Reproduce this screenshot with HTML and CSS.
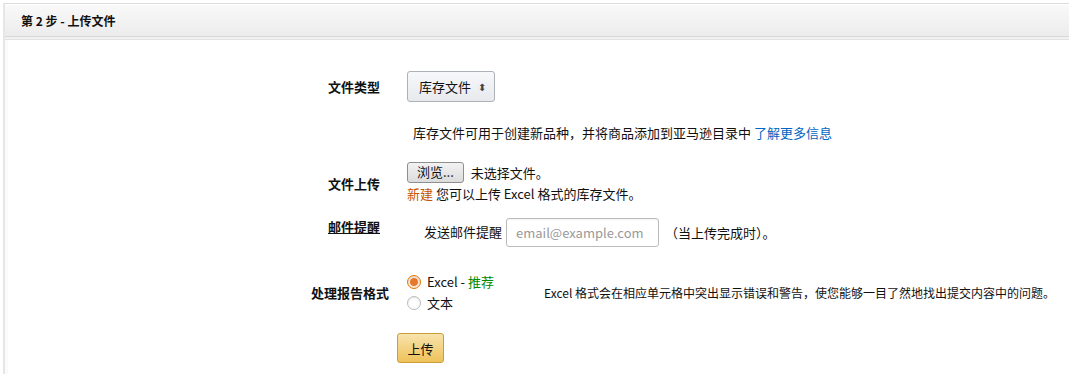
FILE: index.html
```html
<!DOCTYPE html>
<html lang="zh">
<head>
<meta charset="utf-8">
<title>上传文件</title>
<link rel="stylesheet" href="styles.css">
</head>
<body>
<div class="panel">
  <div class="panel-head">第 2 步 - 上传文件</div>
  <div class="panel-body">
    <div class="form">
      <div class="label">文件类型</div>
      <div class="field">
        <span class="select">库存文件<span class="arrows">⬍</span></span>
      </div>

      <div class="label gap-desc"></div>
      <div class="field desc gap-desc">库存文件可用于创建新品种，并将商品添加到亚马逊目录中 <a class="link" href="#">了解更多信息</a></div>

      <div class="label gap-upload">文件上传</div>
      <div class="field upload gap-upload">
        <div class="file-line"><span class="browse">浏览...</span><span class="nofile">未选择文件。</span></div>
        <div class="hint"><span class="new">新建</span> 您可以上传 Excel 格式的库存文件。</div>
      </div>

      <div class="label gap-email label-top"><span class="underline">邮件提醒</span></div>
      <div class="field email gap-email">
        <span>发送邮件提醒</span>
        <span class="input">email@example.com</span>
        <span class="when">（当上传完成时）。</span>
      </div>

      <div class="label wide gap-report">处理报告格式</div>
      <div class="field report gap-report">
        <div class="radios">
          <div class="radio-row"><span class="radio checked"></span><span>Excel - <span class="rec">推荐</span></span></div>
          <div class="radio-row"><span class="radio"></span><span>文本</span></div>
        </div>
        <div class="report-desc">Excel 格式会在相应单元格中突出显示错误和警告，使您能够一目了然地找出提交内容中的问题。</div>
      </div>

      <div class="label gap-submit"></div>
      <div class="field submit gap-submit"><span class="btn-upload">上传</span></div>
    </div>
  </div>
</div>
</body>
</html>
```

FILE: styles.css
```css
html, body {
  margin: 0;
  padding: 0;
  background: #fff;
}
body {
  font-family: "Noto Sans CJK SC", "Liberation Sans", sans-serif;
  font-size: 13px;
  color: #111;
  overflow: hidden;
}
.panel {
  margin: 3px -20px 0 3px;
  border: 1px solid #dcdcdc;
  border-left: 2px solid #e6e6e6;
  min-height: 380px;
  box-shadow: inset 3px 0 0 #fafafa;
}
.panel-head {
  height: 31px;
  line-height: 31px;
  padding-left: 16px;
  font-size: 12px;
  font-weight: bold;
  background: linear-gradient(#f9f9f9, #ececec);
  border-top: 1px solid #fff;
  border-bottom: 1px solid #d8d8d8;
  box-shadow: 0 2px 0 #f1f1f1, 0 3px 0 #e2e2e2;
}
.panel-body {
  padding-top: 34px;
}
.form {
  display: grid;
  grid-template-columns: 375px 1fr;
  column-gap: 27px;
  align-items: center;
}
.label {
  text-align: right;
  font-weight: bold;
  font-size: 13px;
}
.label.wide {
  margin-right: -9px;
}
.label.label-top {
  align-self: start;
  line-height: 18px;
}
.underline {
  text-decoration: underline;
}
.gap-desc { margin-top: 19px; }
.gap-upload { margin-top: 17px; }
.gap-email { margin-top: 14px; }
.gap-report { margin-top: 24px; }
.gap-submit { margin-top: 20px; }
.select {
  display: inline-flex;
  align-items: center;
  height: 29px;
  padding: 0 8px 0 11px;
  border: 1px solid #adb1b8;
  border-radius: 3px;
  background: linear-gradient(#f7f8fa, #e7e9ec);
  box-sizing: content-box;
  font-size: 13px;
}
.arrows {
  font-size: 10px;
  margin-left: 7px;
  color: #444;
}
.desc {
  padding-left: 6px;
  line-height: 24px;
}
.link {
  color: #0066c0;
  text-decoration: none;
}
.file-line {
  display: flex;
  align-items: center;
  height: 21px;
}
.browse {
  display: inline-block;
  height: 19px;
  line-height: 18px;
  padding: 0 9px;
  border: 1px solid #8f8f8f;
  border-radius: 3px;
  background: linear-gradient(#f2f2f2, #dcdcdc);
  margin-right: 7px;
}
.hint {
  line-height: 20px;
  margin-top: 1px;
}
.new {
  color: #c45500;
}
.email {
  display: flex;
  align-items: center;
  padding-left: 17px;
}
.email > span:first-child {
  margin-top: -2px;
}
.input {
  display: inline-flex;
  align-items: center;
  width: 142px;
  height: 27px;
  padding-left: 9px;
  margin-left: 4px;
  border: 1px solid #bbb;
  border-radius: 3px;
  color: #999;
  box-shadow: inset 0 1px 1px rgba(0,0,0,0.05);
}
.when {
  margin-left: 6px;
}
.report {
  display: flex;
  align-items: center;
}
.radios {
  width: 137px;
}
.radio-row {
  display: flex;
  align-items: center;
  height: 21px;
}
.radio {
  width: 14px;
  height: 14px;
  border: 1px solid #bbb;
  border-radius: 50%;
  box-sizing: border-box;
  margin-right: 6px;
  background: #fff;
  box-shadow: inset 0 1px 2px rgba(0,0,0,0.1);
}
.radio.checked {
  border-color: #e77600;
  background: radial-gradient(circle, #e4782c 0 3.5px, #fbe9dc 4.5px);
}
.rec {
  color: #008a00;
}
.report-desc {
  font-size: 12px;
}
.submit {
  margin-left: -10px;
}
.btn-upload {
  display: inline-flex;
  align-items: center;
  justify-content: center;
  width: 45px;
  height: 28px;
  border: 1px solid #c89f3a;
  border-radius: 3px;
  background: linear-gradient(#f8e3ad, #eec25a);
  font-size: 13px;
}
```
